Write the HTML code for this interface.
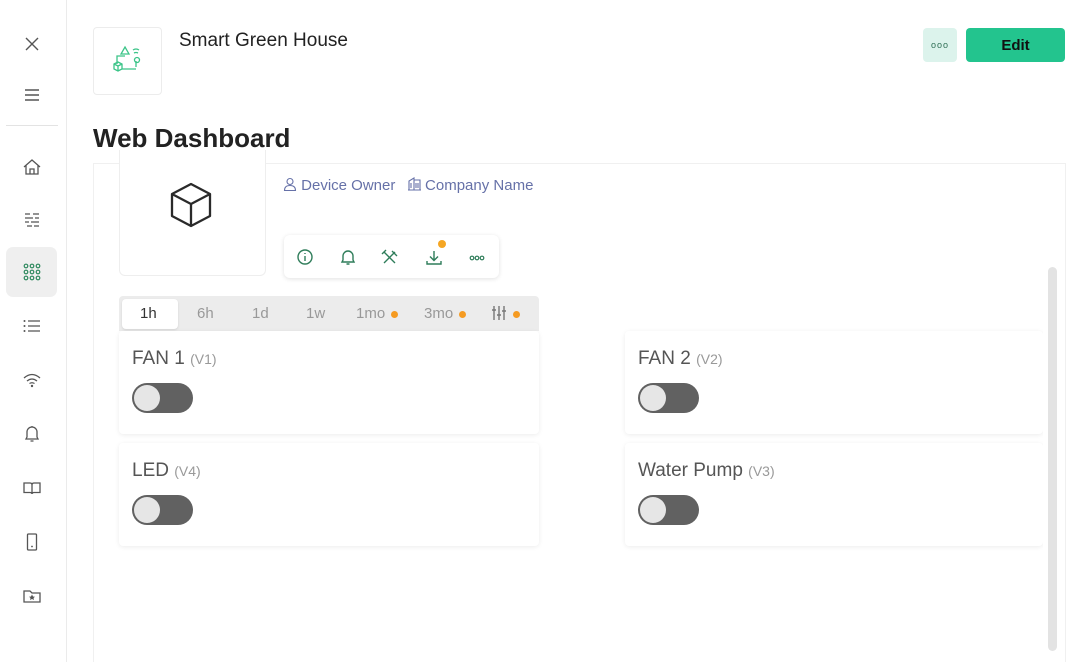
<!DOCTYPE html>
<html><head><style>
*{box-sizing:border-box;margin:0;padding:0}
html,body{width:1080px;height:662px;overflow:hidden}
body{background:#fff;font-family:"Liberation Sans",sans-serif;position:relative}
.abs{position:absolute}
.side{left:0;top:0;width:67px;height:662px;border-right:1px solid #ebebeb}
.si{position:absolute;left:21px;width:22px;height:22px}
.card{position:absolute;background:#fff;border-radius:4px;box-shadow:0 1px 5px rgba(0,0,0,.08)}
.lbl{position:absolute;left:13px;top:17px;font-size:19px;color:#555}
.lbl span{font-size:14px;color:#999}
.tg{position:absolute;left:13px;top:52px;width:61px;height:30px;border-radius:15px;background:#616161}
.tg:after{content:"";position:absolute;left:2px;top:2px;width:26px;height:26px;border-radius:50%;background:#e6e6e6}
.tab{position:absolute;top:305px;font-size:15px;color:#999}
.dot{display:inline-block;width:7px;height:7px;border-radius:50%;background:#f59b22;margin-left:6px;vertical-align:middle}
</style></head><body>
<div class="abs side">
<svg class="si" style="top:33px" viewBox="0 0 22 22"><path d="M5 5L17 17M17 5L5 17" stroke="#555" stroke-width="1.4"/></svg>
<svg class="si" style="top:84px" viewBox="0 0 22 22"><path d="M4 6H18M4 11H18M4 16H18" stroke="#555" stroke-width="1.4"/></svg>
<div class="abs" style="left:6px;top:125px;width:52px;height:1px;background:#e3e3e3"></div>
<svg class="si" style="top:156px" viewBox="0 0 22 22"><path d="M3 11L11 4L19 11M5 9V18H17V9M9 18V13H13V18" stroke="#555" stroke-width="1.3" fill="none"/></svg>
<svg class="si" style="top:208px" viewBox="0 0 22 22"><path d="M4 6H9M12 6H18M4 10H12M14 10H18M4 14H8M10 14H18M6 18H11M13 18H18" stroke="#555" stroke-width="1.2"/></svg>
<div class="abs" style="left:6px;top:247px;width:51px;height:50px;border-radius:7px;background:#efefef"></div>
<svg class="si" style="top:261px" viewBox="0 0 22 22"><g fill="none" stroke="#2f8a5f" stroke-width="1.2"><circle cx="5" cy="5" r="1.8"/><circle cx="11" cy="5" r="1.8"/><circle cx="17" cy="5" r="1.8"/><circle cx="5" cy="11" r="1.8"/><circle cx="11" cy="11" r="1.8"/><circle cx="17" cy="11" r="1.8"/><circle cx="5" cy="17" r="1.8"/><circle cx="11" cy="17" r="1.8"/><circle cx="17" cy="17" r="1.8"/></g></svg>
<svg class="si" style="top:315px" viewBox="0 0 22 22"><path d="M7 6H19M7 11H19M7 16H19" stroke="#555" stroke-width="1.3"/><circle cx="3.5" cy="6" r="1" fill="#555"/><circle cx="3.5" cy="11" r="1" fill="#555"/><circle cx="3.5" cy="16" r="1" fill="#555"/></svg>
<svg class="si" style="top:369px" viewBox="0 0 22 22"><path d="M3 9Q11 2 19 9M6 12Q11 8 16 12M8.5 14.5Q11 13 13.5 14.5" stroke="#555" stroke-width="1.3" fill="none"/><circle cx="11" cy="17" r="1.2" fill="#555"/></svg>
<svg class="si" style="top:423px" viewBox="0 0 22 22"><path d="M5 16H17L16 14V9A5 5 0 0 0 6 9V14ZM9.5 18H12.5M11 4V3" stroke="#555" stroke-width="1.3" fill="none"/></svg>
<svg class="si" style="top:477px" viewBox="0 0 22 22"><path d="M3 6H9Q11 6 11 8V17Q11 15.5 9 15.5H3ZM19 6H13Q11 6 11 8V17Q11 15.5 13 15.5H19Z" stroke="#555" stroke-width="1.3" fill="none"/></svg>
<svg class="si" style="top:531px" viewBox="0 0 22 22"><rect x="6.5" y="3" width="9" height="16" rx="1" stroke="#555" stroke-width="1.3" fill="none"/><circle cx="11" cy="15.5" r=".9" fill="#555"/></svg>
<svg class="si" style="top:585px" viewBox="0 0 22 22"><path d="M3 6V17H19V8H11L9 6Z" stroke="#555" stroke-width="1.3" fill="none"/><path d="M11 9.5L12 11.5L14 11.7L12.5 13L13 15L11 14L9 15L9.5 13L8 11.7L10 11.5Z" fill="#555"/></svg>
</div>

<div class="abs" style="left:93px;top:27px;width:69px;height:68px;border:1px solid #ececec;border-radius:4px"></div>
<svg class="abs" style="left:108px;top:42px" width="38" height="38" viewBox="0 0 38 38"><g fill="none" stroke="#3bc488" stroke-width="1.3"><path d="M17 5L21 12H13Z"/><path d="M9 22V14H17M14 27H28M28 19V25"/><circle cx="29" cy="18" r="2.5"/><path d="M6 22L10 20L14 22V27L10 29L6 27ZM6 22L10 24L14 22M10 24V29"/><path d="M25 8Q28 6 31 8M26 11Q28 10 30 11"/></g></svg>
<div class="abs" style="left:179px;top:30px;font-size:19px;color:#222">Smart Green House</div>
<div class="abs" style="left:923px;top:28px;width:34px;height:34px;border-radius:4px;background:#dcf3ec;text-align:center;line-height:34px;font-size:9px;color:#2f6f55;letter-spacing:1px">ooo</div>
<div class="abs" style="left:966px;top:28px;width:99px;height:34px;border-radius:4px;background:#23c48e;text-align:center;line-height:36px;font-size:15px;font-weight:bold;color:#111">Edit</div>
<div class="abs" style="left:93px;top:123px;font-size:26px;font-weight:bold;color:#222">Web Dashboard</div>

<div class="abs" style="left:93px;top:163px;width:973px;height:510px;border:1px solid #f0f0f0;border-bottom:none"></div>
<div class="abs" style="left:119px;top:150px;width:147px;height:126px;border:1px solid #eee;border-top:none;border-radius:0 0 6px 6px;background:#fff"></div>
<svg class="abs" style="left:166px;top:180px" width="50" height="50" viewBox="0 0 50 50"><path d="M25 4L44 14V36L25 46L6 36V14ZM6 14L25 24L44 14M25 24V46" stroke="#2a2a2a" stroke-width="2.3" fill="none" stroke-linejoin="round"/></svg>
<div class="abs" style="left:283px;top:177px;font-size:15px;color:#6671a8">
<svg width="14" height="14" viewBox="0 0 14 14" style="vertical-align:-1px"><circle cx="7" cy="4.5" r="3" fill="none" stroke="#6671a8" stroke-width="1.1"/><path d="M1.5 13.5Q1.5 8.5 7 8.5Q12.5 8.5 12.5 13.5Z" fill="none" stroke="#6671a8" stroke-width="1.1"/></svg> Device Owner &nbsp;
<svg width="13" height="14" viewBox="0 0 13 14" style="vertical-align:-1px"><path d="M1 13V4L6 1V13M6 3H12V13M0 13H13M3 6V11M8 6V11M10 6V11" fill="none" stroke="#6671a8" stroke-width="1.1"/></svg> Company Name</div>

<div class="abs" style="left:284px;top:235px;width:215px;height:43px;border-radius:6px;background:#fff;box-shadow:0 1px 5px rgba(0,0,0,.12)"></div>
<svg class="abs" style="left:296px;top:248px" width="195" height="18" viewBox="0 0 195 18"><g fill="none" stroke="#2f7d5a" stroke-width="1.4"><circle cx="9" cy="9" r="7"/><path d="M9 8V13M9 5V6"/><path d="M46 14H58L57 12V8A4.5 4.5 0 0 0 47 8V12ZM50.5 16H53.5"/><path d="M88 4L99 15M99 4L88 15M86 6L90 2M96 3L101 8"/><path d="M138 3V12M134 8.5L138 12.5L142 8.5M131 13V16H145V13"/></g><g fill="none" stroke="#2f7d5a" stroke-width="1.2"><circle cx="176" cy="10" r="1.8"/><circle cx="181" cy="10" r="1.8"/><circle cx="186" cy="10" r="1.8"/></g></svg>
<div class="abs" style="left:438px;top:240px;width:8px;height:8px;border-radius:50%;background:#f5a623"></div>

<div class="abs" style="left:119px;top:296px;width:420px;height:35px;background:#ececec;border-radius:4px 4px 0 0"></div>
<div class="abs" style="left:122px;top:299px;width:56px;height:30px;background:#fff;border-radius:4px;box-shadow:0 1px 2px rgba(0,0,0,.1)"></div>
<div class="tab" style="left:140px;color:#333">1h</div>
<div class="tab" style="left:197px">6h</div>
<div class="tab" style="left:252px">1d</div>
<div class="tab" style="left:306px">1w</div>
<div class="tab" style="left:356px">1mo<span class="dot"></span></div>
<div class="tab" style="left:424px">3mo<span class="dot"></span></div>
<div class="tab" style="left:491px"><svg width="16" height="16" viewBox="0 0 16 16" style="vertical-align:-3px"><path d="M3 1V15M8 1V15M13 1V15M1 5H5M6 10H10M11 6H15" stroke="#777" stroke-width="1.4"/></svg><span class="dot"></span></div>

<div class="card" style="left:119px;top:331px;width:420px;height:103px"><div class="lbl">FAN 1 <span>(V1)</span></div><div class="tg"></div></div>
<div class="card" style="left:119px;top:443px;width:420px;height:103px"><div class="lbl">LED <span>(V4)</span></div><div class="tg"></div></div>
<div class="card" style="left:625px;top:331px;width:418px;height:103px"><div class="lbl">FAN 2 <span>(V2)</span></div><div class="tg"></div></div>
<div class="card" style="left:625px;top:443px;width:418px;height:103px"><div class="lbl">Water Pump <span>(V3)</span></div><div class="tg"></div></div>
<div class="abs" style="left:1043px;top:330px;width:5px;height:220px;background:#fff"></div>
<div class="abs" style="left:1048px;top:267px;width:9px;height:384px;border-radius:5px;background:#e3e3e3"></div>
</body></html>
